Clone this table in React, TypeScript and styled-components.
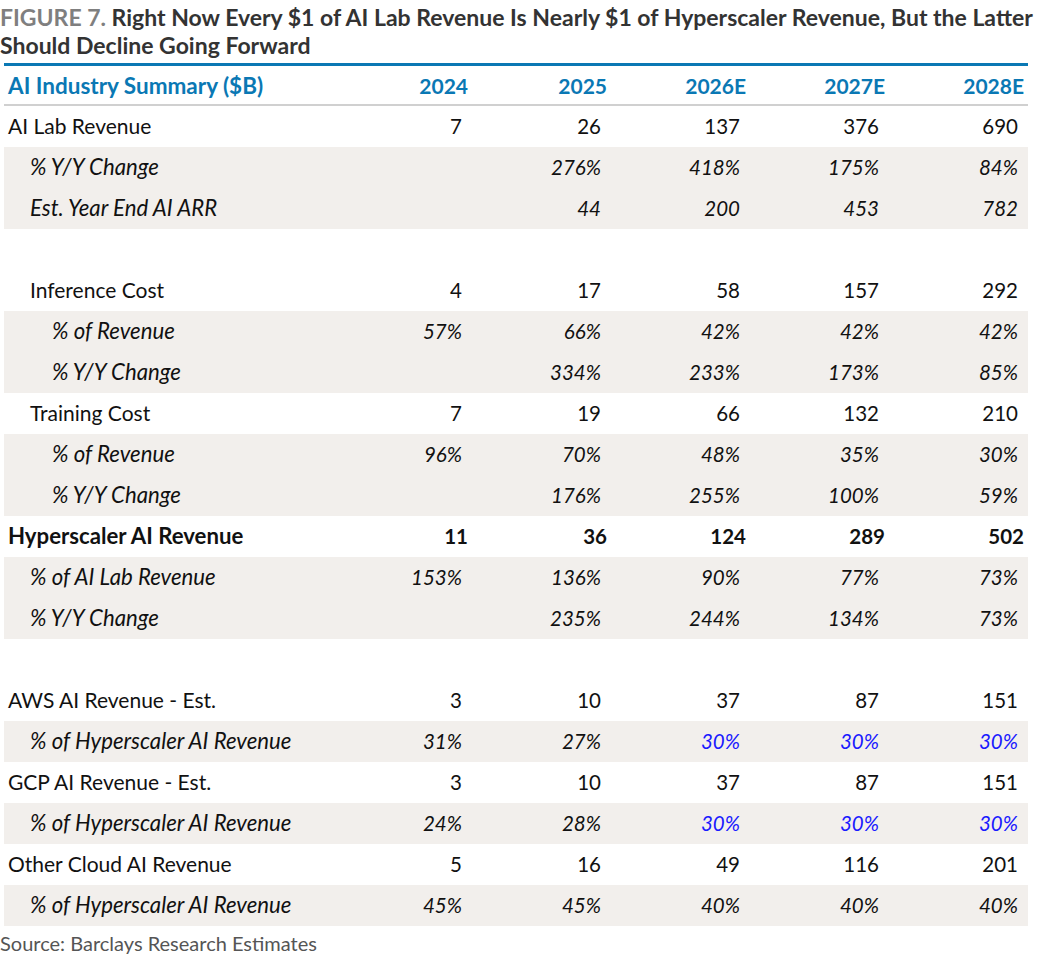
import styled, { createGlobalStyle } from "styled-components";

const GlobalStyle = createGlobalStyle`
  body {
    margin: 0;
    background: #ffffff;
    font-family: "Lato", "Liberation Sans", sans-serif;
    color: #111111;
  }
`;

type Cell = string | { v: string; blue?: boolean };

interface RowData {
    label: string;
    level: 0 | 1 | 2;
    kind: "main" | "sub" | "bold" | "blank";
    values: Cell[];
}

const rows: RowData[] = [
    {label: "AI Lab Revenue", level: 0, kind: "main", values: ["7", "26", "137", "376", "690"]},
    {label: "% Y/Y Change", level: 1, kind: "sub", values: ["", "276%", "418%", "175%", "84%"]},
    {label: "Est. Year End AI ARR", level: 1, kind: "sub", values: ["", "44", "200", "453", "782"]},
    {label: "", level: 0, kind: "blank", values: []},
    {label: "Inference Cost", level: 1, kind: "main", values: ["4", "17", "58", "157", "292"]},
    {label: "% of Revenue", level: 2, kind: "sub", values: ["57%", "66%", "42%", "42%", "42%"]},
    {label: "% Y/Y Change", level: 2, kind: "sub", values: ["", "334%", "233%", "173%", "85%"]},
    {label: "Training Cost", level: 1, kind: "main", values: ["7", "19", "66", "132", "210"]},
    {label: "% of Revenue", level: 2, kind: "sub", values: ["96%", "70%", "48%", "35%", "30%"]},
    {label: "% Y/Y Change", level: 2, kind: "sub", values: ["", "176%", "255%", "100%", "59%"]},
    {label: "Hyperscaler AI Revenue", level: 0, kind: "bold", values: ["11", "36", "124", "289", "502"]},
    {label: "% of AI Lab Revenue", level: 1, kind: "sub", values: ["153%", "136%", "90%", "77%", "73%"]},
    {label: "% Y/Y Change", level: 1, kind: "sub", values: ["", "235%", "244%", "134%", "73%"]},
    {label: "", level: 0, kind: "blank", values: []},
    {label: "AWS AI Revenue - Est.", level: 0, kind: "main", values: ["3", "10", "37", "87", "151"]},
    {label: "% of Hyperscaler AI Revenue", level: 1, kind: "sub", values: ["31%", "27%", {v: "30%", blue: true}, {v: "30%", blue: true}, {v: "30%", blue: true}]},
    {label: "GCP AI Revenue - Est.", level: 0, kind: "main", values: ["3", "10", "37", "87", "151"]},
    {label: "% of Hyperscaler AI Revenue", level: 1, kind: "sub", values: ["24%", "28%", {v: "30%", blue: true}, {v: "30%", blue: true}, {v: "30%", blue: true}]},
    {label: "Other Cloud AI Revenue", level: 0, kind: "main", values: ["5", "16", "49", "116", "201"]},
    {label: "% of Hyperscaler AI Revenue", level: 1, kind: "sub", values: ["45%", "45%", "40%", "40%", "40%"]},
];

const years = ["2024", "2025", "2026E", "2027E", "2028E"];
const indents = [4, 26, 48];

export default function App() {
    return (
        <Page>
            <GlobalStyle/>
            <Title>
                <FigureNo>FIGURE 7.</FigureNo> Right Now Every $1 of AI Lab Revenue Is Nearly $1 of Hyperscaler Revenue, But the Latter
                <br/>
                Should Decline Going Forward
            </Title>
            <Table>
                <HeaderRow>
                    <HeaderLabel>AI Industry Summary ($B)</HeaderLabel>
                    {years.map(y => <HeaderYear key={y}>{y}</HeaderYear>)}
                </HeaderRow>
                {rows.map((r, i) => (
                    <Row key={i} $shaded={r.kind === "sub"}>
                        <Label $indent={indents[r.level]} $kind={r.kind}>{r.label}</Label>
                        {r.values.map((c, j) => {
                            const cell = typeof c === "string" ? {v: c} : c;
                            return (
                                <Value key={j} $kind={r.kind} $blue={!!cell.blue}>{cell.v}</Value>
                            );
                        })}
                    </Row>
                ))}
            </Table>
            <Source>Source: Barclays Research Estimates</Source>
        </Page>
    );
}

const Page = styled.div`
  width: 1056px;
  padding-top: 3px;
`;

const Title = styled.div`
  font-size: 23px;
  line-height: 28px;
  font-weight: 700;
  color: #333333;
  margin-bottom: 4px;
  white-space: nowrap;
`;

const FigureNo = styled.span`
  color: #7f7f7f;
`;

const Table = styled.div`
  margin-left: 4px;
  width: 1024px;
  border-top: 3px solid #0a78b4;
`;

const columns = "329px repeat(5, 139px)";

const HeaderRow = styled.div`
  display: grid;
  grid-template-columns: ${columns};
  height: 40px;
  box-sizing: border-box;
  align-items: center;
  border-bottom: 2px solid #d0d0d0;
  color: #0a78b4;
  font-weight: 700;
`;

const HeaderLabel = styled.div`
  padding-left: 4px;
  font-size: 22.5px;
`;

const HeaderYear = styled.div`
  text-align: right;
  padding-right: 4px;
  font-size: 21px;
`;

const Row = styled.div<{ $shaded: boolean }>`
  display: grid;
  grid-template-columns: ${columns};
  height: 41px;
  padding-bottom: 2px;
  box-sizing: border-box;
  align-items: center;
  background: ${p => p.$shaded ? "#f2efec" : "transparent"};
`;

const Label = styled.div<{ $indent: number; $kind: string }>`
  padding-left: ${p => p.$indent}px;
  font-size: ${p => p.$kind === "main" ? 21 : p.$kind === "blank" ? 20 : 22.2}px;
  font-style: ${p => p.$kind === "sub" ? "italic" : "normal"};
  font-weight: ${p => p.$kind === "bold" ? 700 : 400};
  white-space: nowrap;
`;

const Value = styled.div<{ $kind: string; $blue: boolean }>`
  text-align: right;
  font-size: 20.5px;
  padding-right: ${p => p.$kind === "bold" ? 4 : 10}px;
  font-style: ${p => p.$kind === "sub" ? "italic" : "normal"};
  font-weight: ${p => p.$kind === "bold" ? 700 : 400};
  color: ${p => p.$blue ? "#1a1aff" : "#111111"};
`;

const Source = styled.div`
  font-size: 20px;
  line-height: 34px;
  color: #555555;
`;
